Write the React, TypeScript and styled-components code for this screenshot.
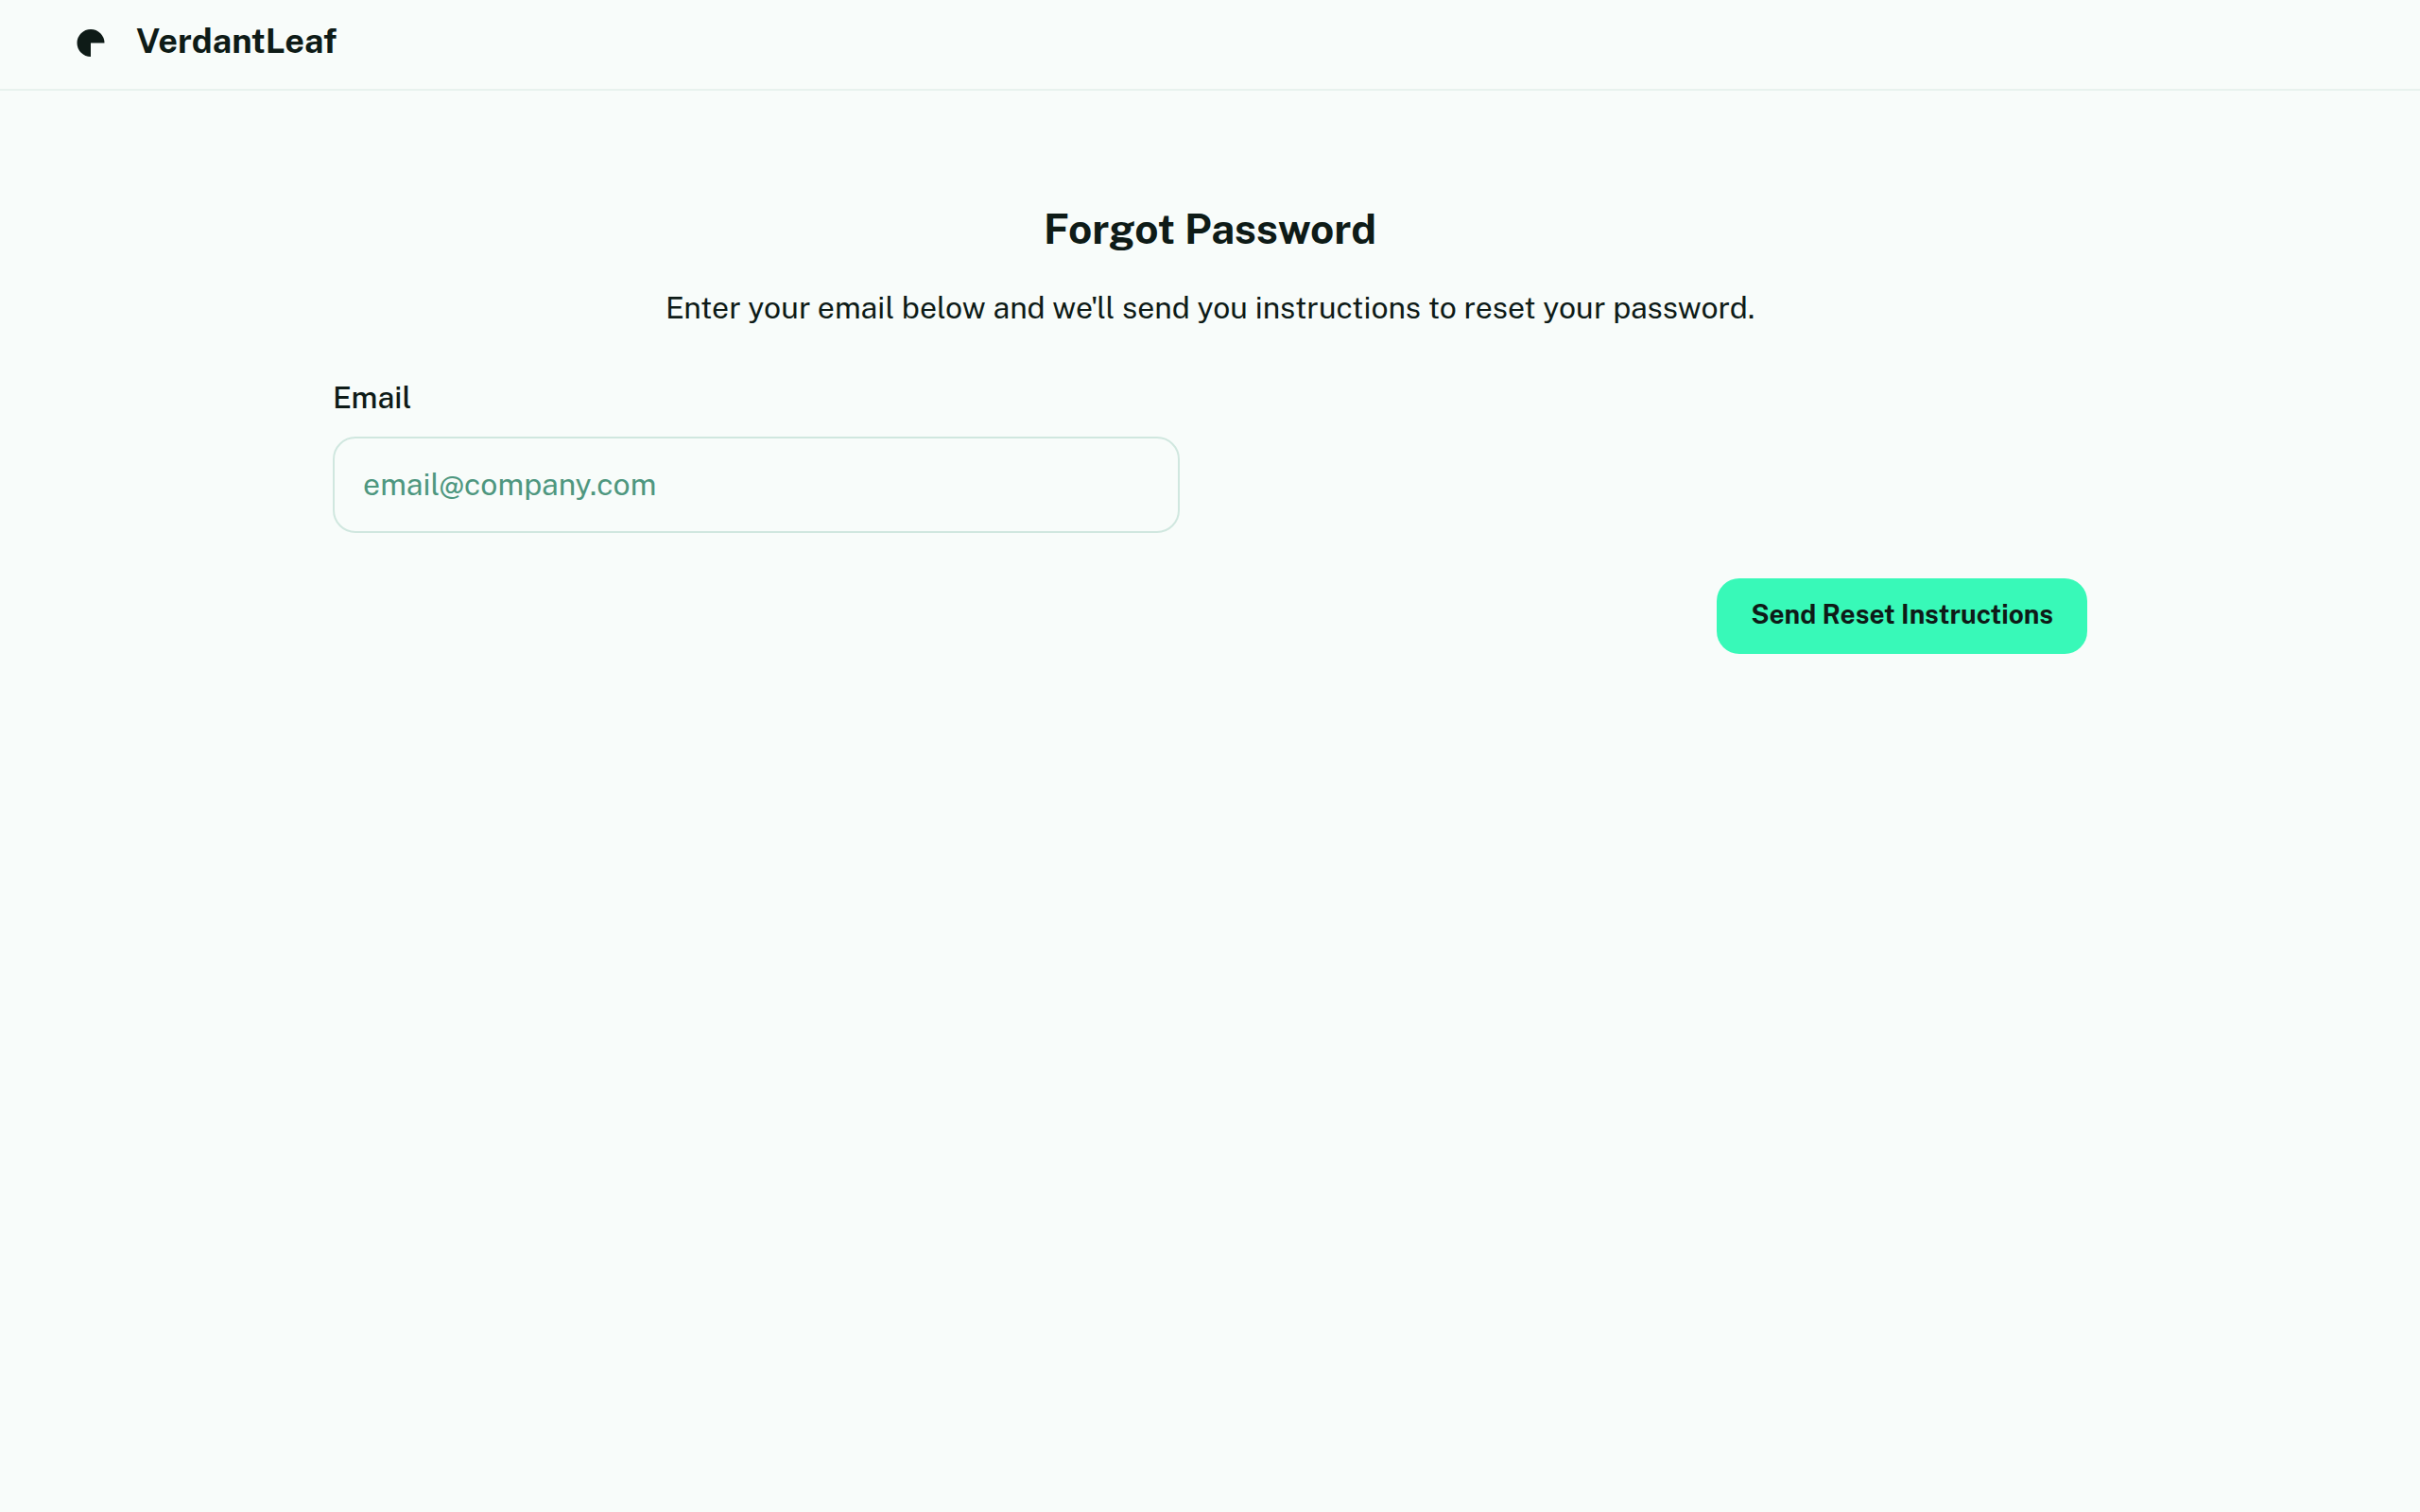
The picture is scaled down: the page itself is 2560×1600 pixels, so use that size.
import React from "react";
import styled, { createGlobalStyle } from "styled-components";

const GlobalStyle = createGlobalStyle`
  *, *::before, *::after { box-sizing: border-box; }
  body {
    margin: 0;
    background: #f8fcfa;
    color: #0e1b17;
    font-family: "Public Sans", Inter, "Liberation Sans", sans-serif;
  }
`;

const Header = styled.header`
  display: flex;
  align-items: center;
  gap: 32px;
  height: 96px;
  padding: 0 80px 6px;
  border-bottom: 2px solid #e8f2ee;
`;

const Logo = styled.svg`
  width: 32px;
  height: 32px;
  fill: #0e1b17;
`;

const Brand = styled.span`
  padding-bottom: 2px;
  font-size: 36px;
  line-height: 44px;
  font-weight: 700;
`;

const Main = styled.main`
  max-width: 1920px;
  margin: 0 auto;
  padding: 118px 32px 0;
`;

const Title = styled.h1`
  margin: 0;
  font-size: 44px;
  line-height: 56px;
  font-weight: 700;
  text-align: center;
`;

const Intro = styled.p`
  margin: 28px 0 0;
  font-size: 32px;
  line-height: 56px;
  text-align: center;
`;

const Form = styled.form`
  display: flex;
  flex-direction: column;
  gap: 48px;
  padding-top: 44px;
`;

const Field = styled.div`
  display: flex;
  flex-direction: column;
  gap: 18px;
  width: 100%;
  max-width: 896px;
`;

const Label = styled.label`
  font-size: 32px;
  line-height: 46px;
  font-weight: 500;
`;

const TextInput = styled.input`
  width: 100%;
  height: 102px;
  padding: 0 30px 2px;
  border: 2px solid #d0e7df;
  border-radius: 24px;
  background: #f8fcfa;
  color: inherit;
  font: inherit;
  font-size: 32px;

  &::placeholder {
    color: #4e977f;
    opacity: 1;
  }
`;

const SubmitButton = styled.button`
  align-self: flex-end;
  height: 80px;
  padding: 0 36px 6px;
  border: 0;
  border-radius: 24px;
  background: #38f9b8;
  color: #0e1b17;
  font: inherit;
  font-size: 28px;
  font-weight: 700;
  cursor: pointer;
`;

export default function App() {
  return (
    <>
      <GlobalStyle />
      <Header>
        <Logo viewBox="0 0 32 32" aria-hidden="true">
          <path d="M16 32A14.5 14.5 0 1 1 30.5 17.5H16Z" />
        </Logo>
        <Brand>VerdantLeaf</Brand>
      </Header>
      <Main>
        <Title>Forgot Password</Title>
        <Intro>Enter your email below and we'll send you instructions to reset your password.</Intro>
        <Form onSubmit={(event) => event.preventDefault()}>
          <Field>
            <Label htmlFor="email">Email</Label>
            <TextInput id="email" type="email" placeholder="email@company.com" />
          </Field>
          <SubmitButton type="submit">Send Reset Instructions</SubmitButton>
        </Form>
      </Main>
    </>
  );
}
